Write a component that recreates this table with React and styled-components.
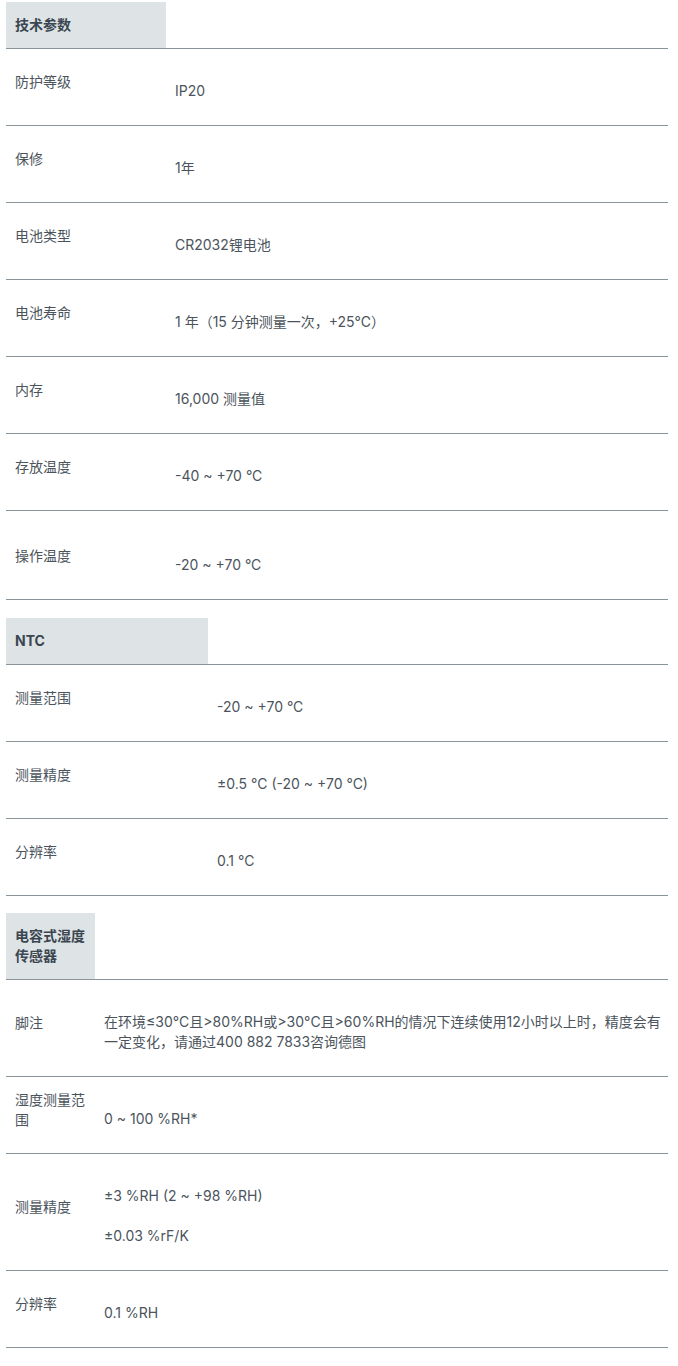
import React from "react";
import styled, { createGlobalStyle } from "styled-components";

const GlobalStyle = createGlobalStyle`
  html, body {
    margin: 0;
    padding: 0;
    background: #ffffff;
  }
  body {
    font-family: "Inter", "Noto Sans CJK SC", sans-serif;
    font-size: 14px;
    line-height: 20px;
    color: #4b545c;
  }
`;

const Page = styled.div`
  display: flex;
  flex-direction: column;
  gap: 17.5px;
  padding: 2px 10px 20px 6px;
`;

const SpecTable = styled.section`
  display: flex;
  flex-direction: column;
`;

const HeaderRow = styled.div`
  display: flex;
  border-bottom: 1px solid #8a959b;
`;

const HeaderCell = styled.div`
  width: ${(p) => p.$width}px;
  box-sizing: border-box;
  padding: 13px 0 13px 9px;
  background: #dee3e6;
  font-weight: 700;
  color: #3b4650;
`;

const Row = styled.div`
  display: grid;
  grid-template-columns: ${(p) => p.$labelWidth}px 1fr;
  align-items: center;
  padding: ${(p) => p.$top ?? 24}px 4px 24px 0;
  border-bottom: 1px solid #8a959b;
`;

const Label = styled.div`
  margin: -11px 0 -1px;
  padding-left: 9px;
`;

const Value = styled.div`
  display: flex;
  flex-direction: column;
  gap: 20px;
  margin-top: 8px;
  padding-left: 10px;
`;

const Line = styled.p`
  margin: 0;
`;

const sections = [
  {
    title: "技术参数",
    labelWidth: 159,
    rows: [
      { label: "防护等级", values: ["IP20"] },
      { label: "保修", values: ["1年"] },
      { label: "电池类型", values: ["CR2032锂电池"] },
      { label: "电池寿命", values: ["1 年（15 分钟测量一次，+25℃）"] },
      { label: "内存", values: ["16,000 测量值"] },
      { label: "存放温度", values: ["-40 ~ +70 °C"] },
      { label: "操作温度", values: ["-20 ~ +70 °C"], top: 36 },
    ],
  },
  {
    title: "NTC",
    labelWidth: 201,
    rows: [
      { label: "测量范围", values: ["-20 ~ +70 °C"] },
      { label: "测量精度", values: ["±0.5 °C (-20 ~ +70 °C)"] },
      { label: "分辨率", values: ["0.1 °C"] },
    ],
  },
  {
    title: "电容式湿度传感器",
    labelWidth: 88,
    rows: [
      {
        label: "脚注",
        values: [
          "在环境≤30°C且>80%RH或>30°C且>60%RH的情况下连续使用12小时以上时，精度会有一定变化，请通过400 882 7833咨询德图",
        ],
      },
      { label: "湿度测量范围", values: ["0 ~ 100 %RH*"] },
      { label: "测量精度", values: ["±3 %RH (2 ~ +98 %RH)", "±0.03 %rF/K"] },
      { label: "分辨率", values: ["0.1 %RH"] },
    ],
  },
];

export default function App() {
  return (
    <>
      <GlobalStyle />
      <Page>
        {sections.map((s) => (
          <SpecTable key={s.title}>
            <HeaderRow>
              <HeaderCell $width={s.labelWidth + 1}>{s.title}</HeaderCell>
            </HeaderRow>
            {s.rows.map((r) => (
              <Row key={r.label} $labelWidth={s.labelWidth} $top={r.top}>
                <Label>{r.label}</Label>
                <Value>
                  {r.values.map((v) => (
                    <Line key={v}>{v}</Line>
                  ))}
                </Value>
              </Row>
            ))}
          </SpecTable>
        ))}
      </Page>
    </>
  );
}
